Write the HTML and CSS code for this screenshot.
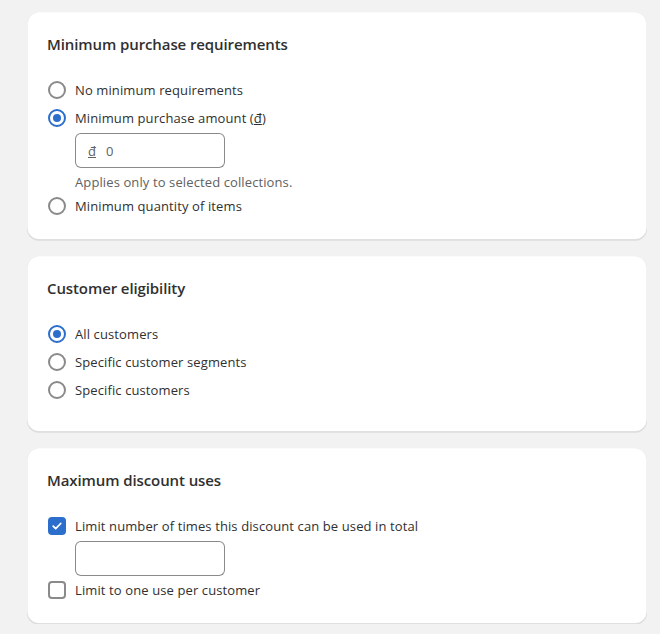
FILE: index.html
```html
<!DOCTYPE html>
<html>
<head>
<meta charset="utf-8">
<link rel="stylesheet" href="styles.css">
</head>
<body>
<div class="page">
  <section class="card">
    <h2 class="card-title">Minimum purchase requirements</h2>
    <ul class="choices">
      <li class="choice"><span class="radio"></span><span class="label">No minimum requirements</span></li>
      <li class="choice"><span class="radio checked"></span><span class="label">Minimum purchase amount (<u>đ</u>)</span></li>
      <li class="sub">
        <div class="input"><span class="prefix"><u>đ</u></span><span class="value">0</span></div>
        <div class="help">Applies only to selected collections.</div>
      </li>
      <li class="choice"><span class="radio"></span><span class="label">Minimum quantity of items</span></li>
    </ul>
  </section>
  <section class="card card-tall">
    <h2 class="card-title">Customer eligibility</h2>
    <ul class="choices">
      <li class="choice"><span class="radio checked"></span><span class="label">All customers</span></li>
      <li class="choice"><span class="radio"></span><span class="label">Specific customer segments</span></li>
      <li class="choice"><span class="radio"></span><span class="label">Specific customers</span></li>
    </ul>
  </section>
  <section class="card">
    <h2 class="card-title">Maximum discount uses</h2>
    <ul class="choices">
      <li class="choice"><span class="checkbox checked"><svg viewBox="0 0 18 18" width="18" height="18"><path d="M5.2 9.2l2.5 2.5 5-5.2" fill="none" stroke="#fff" stroke-width="1.8" stroke-linecap="round" stroke-linejoin="round"/></svg></span><span class="label">Limit number of times this discount can be used in total</span></li>
      <li class="sub"><div class="input"></div></li>
      <li class="choice"><span class="checkbox"></span><span class="label">Limit to one use per customer</span></li>
    </ul>
  </section>
</div>
</body>
</html>
```
FILE: styles.css
```css
* { box-sizing: border-box; }
html, body { margin: 0; padding: 0; }
body {
  background: #f2f2f2;
  font-family: "Open Sans", "Noto Sans", "Liberation Sans", sans-serif;
  color: #303030;
  font-size: 13px;
}
.page {
  width: 620px;
  margin-left: 27px;
  padding-top: 12px;
  display: flex;
  flex-direction: column;
  gap: 16px;
}
.card {
  background: #fff;
  border-radius: 12px;
  padding: 20px;
  box-shadow: 0 1px 0 0 rgba(26,26,26,0.07), inset 0 -1px 0 0 rgba(0,0,0,0.12), inset 1px 0 0 0 rgba(0,0,0,0.05), inset -1px 0 0 0 rgba(0,0,0,0.05), inset 0 1px 0 0 rgba(0,0,0,0.02);
}
.card-tall { padding-bottom: 28px; }
.card-title {
  margin: 0 0 20px;
  font-size: 15px;
  font-weight: 600;
  line-height: 24px;
  letter-spacing: -0.1px;
}
.choices { list-style: none; margin: 0; padding: 0; }
.choice {
  display: flex;
  align-items: center;
  height: 28px;
}
.label { margin-left: 9px; line-height: 20px; letter-spacing: 0.11px; }
.radio {
  width: 18px; height: 18px;
  border-radius: 50%;
  border: 2px solid #8a8a8a;
  margin-left: 1px;
  position: relative;
  flex: none;
}
.radio.checked { border-color: #2c6ecb; }
.radio.checked::after {
  content: "";
  position: absolute;
  left: 3px; top: 3px;
  width: 8px; height: 8px;
  border-radius: 50%;
  background: #2c6ecb;
}
.checkbox {
  width: 18px; height: 18px;
  border-radius: 4px;
  border: 2px solid #8a8a8a;
  margin-left: 1px;
  flex: none;
  display: flex;
}
.checkbox.checked { background: #2c6ecb; border: none; }
.sub { padding-left: 28px; }
.input {
  width: 150px;
  height: 35px;
  margin-top: 1px;
  border: 1px solid #8a8a8a;
  border-top-color: #888;
  border-radius: 6px;
  display: flex;
  align-items: center;
  padding-left: 12px;
  color: #616161;
}
.prefix { margin-right: 10px; }
.value { color: #616161; }
.help {
  margin-top: 4px;
  line-height: 20px;
  color: #616161;
  letter-spacing: 0.11px;
}
```
